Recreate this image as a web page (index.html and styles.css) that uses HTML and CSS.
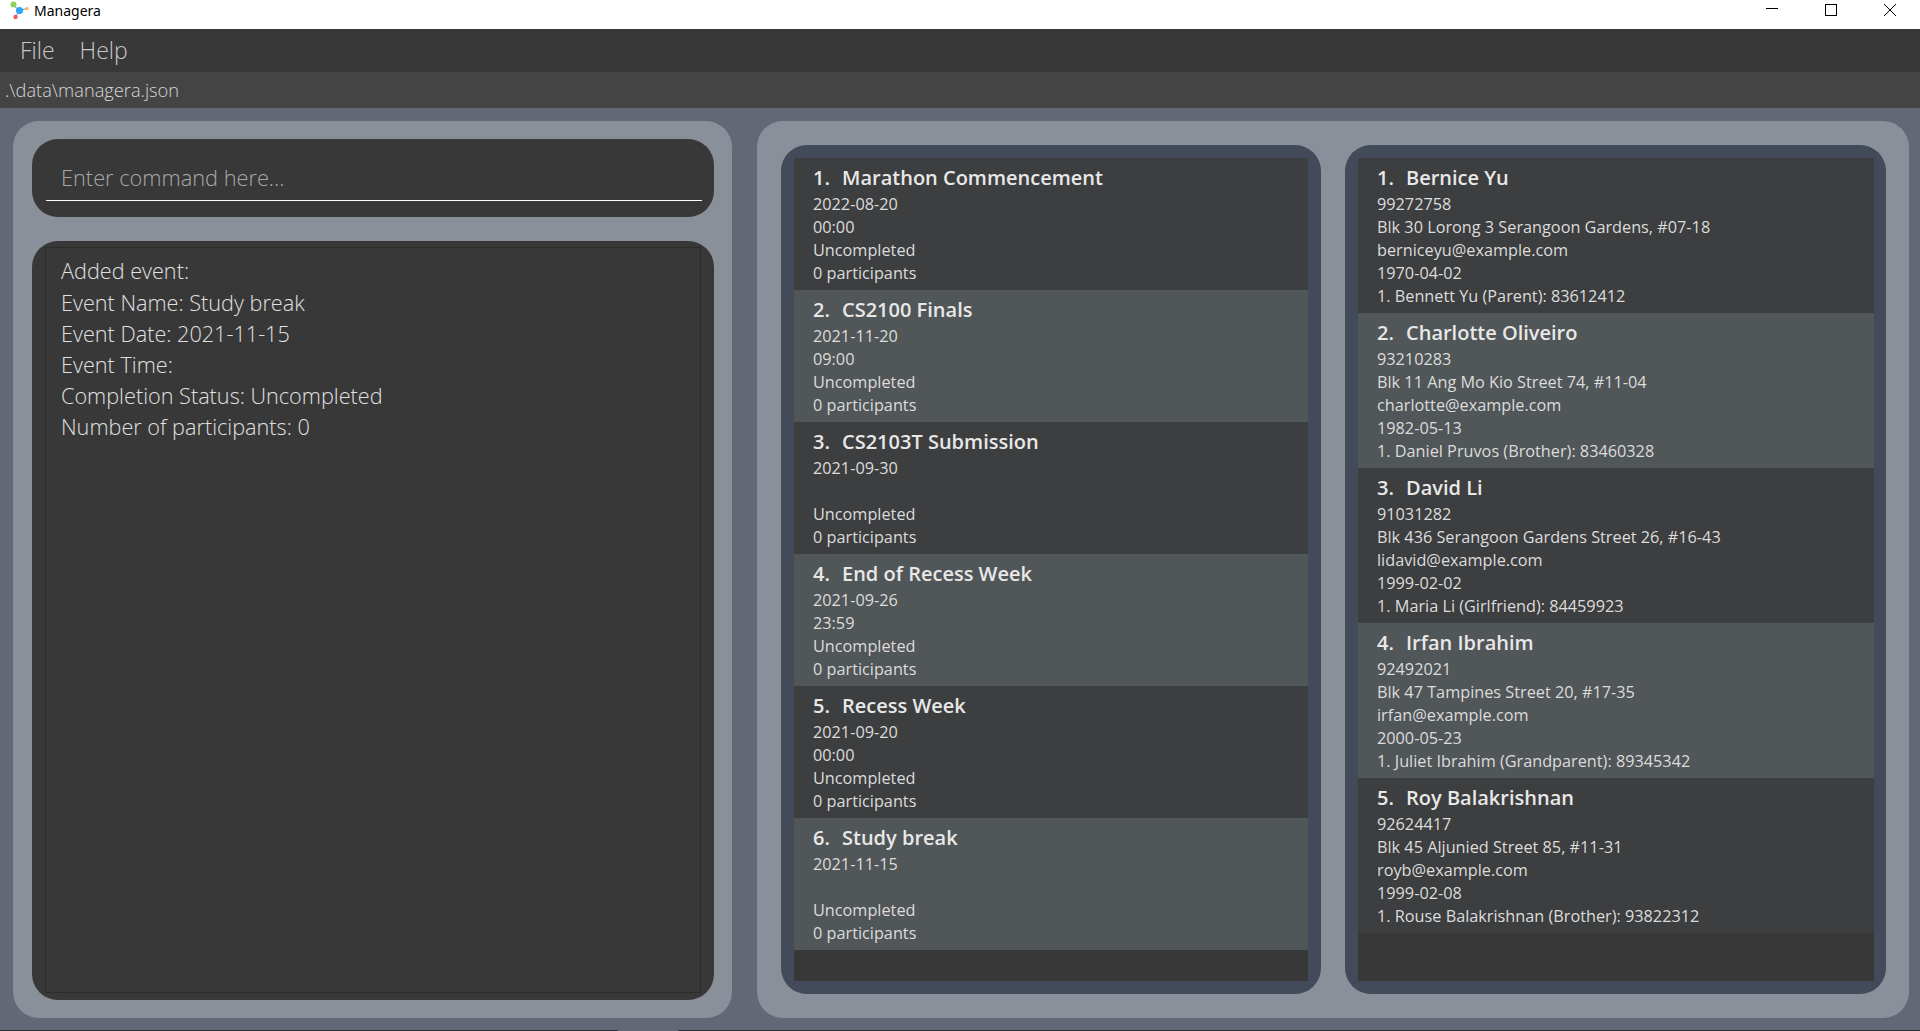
FILE: index.html
```html
<!DOCTYPE html>
<html lang="en">
<head>
    <meta charset="UTF-8">
    <meta name="viewport" content="width=device-width, initial-scale=1.0">
    <title>Managera</title>
    <link rel="stylesheet" href="styles.css">
</head>
<body>
    <header class="title-bar">
        <svg class="app-icon" width="30" height="22" viewBox="0 0 30 22">
            <path d="M13 5 L19.5 10.5 L27 8.5 M19.5 10.5 L15.5 17" stroke="#6b8fb0" stroke-width="1" fill="none"/>
            <circle cx="13.5" cy="4.5" r="3" fill="#8bd45a"/>
            <circle cx="19.5" cy="10.5" r="3.6" fill="#2ea7f2"/>
            <circle cx="27" cy="8.5" r="1.6" fill="#f5b04a"/>
            <circle cx="15.5" cy="17" r="2.2" fill="#f4555f"/>
        </svg>
        <span class="app-name">Managera</span>
        <div class="window-controls">
            <svg width="14" height="14" viewBox="0 0 14 14"><path d="M1 5.5 H13" stroke="#000" fill="none"/></svg>
            <svg width="14" height="14" viewBox="0 0 14 14"><rect x="1.5" y="1.5" width="11" height="11" stroke="#000" fill="none"/></svg>
            <svg width="14" height="14" viewBox="0 0 14 14"><path d="M1 1 L13 13 M13 1 L1 13" stroke="#000" fill="none"/></svg>
        </div>
    </header>
    <nav class="menu-bar">
        <span>File</span>
        <span>Help</span>
    </nav>
    <div class="status-bar">.\data\managera.json</div>
    <main class="main">
        <section class="panel panel-left">
            <div class="command-box">
                <div class="command-input">Enter command here...</div>
            </div>
            <div class="result-box">
                <div class="result-frame">
                    <p>Added event:</p>
                    <p>Event Name: Study break</p>
                    <p>Event Date: 2021-11-15</p>
                    <p>Event Time:</p>
                    <p>Completion Status: Uncompleted</p>
                    <p>Number of participants: 0</p>
                </div>
            </div>
        </section>
        <section class="panel panel-right">
            <div class="list list-events">
                <div class="list-inner">
                    <article class="card event-card">
                        <h3><span>1.</span>Marathon Commencement</h3>
                        <p>2022-08-20</p><p>00:00</p><p>Uncompleted</p><p>0 participants</p>
                    </article>
                    <article class="card event-card alt">
                        <h3><span>2.</span>CS2100 Finals</h3>
                        <p>2021-11-20</p><p>09:00</p><p>Uncompleted</p><p>0 participants</p>
                    </article>
                    <article class="card event-card">
                        <h3><span>3.</span>CS2103T Submission</h3>
                        <p>2021-09-30</p><p></p><p>Uncompleted</p><p>0 participants</p>
                    </article>
                    <article class="card event-card alt">
                        <h3><span>4.</span>End of Recess Week</h3>
                        <p>2021-09-26</p><p>23:59</p><p>Uncompleted</p><p>0 participants</p>
                    </article>
                    <article class="card event-card">
                        <h3><span>5.</span>Recess Week</h3>
                        <p>2021-09-20</p><p>00:00</p><p>Uncompleted</p><p>0 participants</p>
                    </article>
                    <article class="card event-card alt">
                        <h3><span>6.</span>Study break</h3>
                        <p>2021-11-15</p><p></p><p>Uncompleted</p><p>0 participants</p>
                    </article>
                </div>
            </div>
            <div class="list list-persons">
                <div class="list-inner">
                    <article class="card person-card">
                        <h3><span>1.</span>Bernice Yu</h3>
                        <p>99272758</p><p>Blk 30 Lorong 3 Serangoon Gardens, #07-18</p><p>berniceyu@example.com</p><p>1970-04-02</p><p>1. Bennett Yu (Parent): 83612412</p>
                    </article>
                    <article class="card person-card alt">
                        <h3><span>2.</span>Charlotte Oliveiro</h3>
                        <p>93210283</p><p>Blk 11 Ang Mo Kio Street 74, #11-04</p><p>charlotte@example.com</p><p>1982-05-13</p><p>1. Daniel Pruvos (Brother): 83460328</p>
                    </article>
                    <article class="card person-card">
                        <h3><span>3.</span>David Li</h3>
                        <p>91031282</p><p>Blk 436 Serangoon Gardens Street 26, #16-43</p><p>lidavid@example.com</p><p>1999-02-02</p><p>1. Maria Li (Girlfriend): 84459923</p>
                    </article>
                    <article class="card person-card alt">
                        <h3><span>4.</span>Irfan Ibrahim</h3>
                        <p>92492021</p><p>Blk 47 Tampines Street 20, #17-35</p><p>irfan@example.com</p><p>2000-05-23</p><p>1. Juliet Ibrahim (Grandparent): 89345342</p>
                    </article>
                    <article class="card person-card">
                        <h3><span>5.</span>Roy Balakrishnan</h3>
                        <p>92624417</p><p>Blk 45 Aljunied Street 85, #11-31</p><p>royb@example.com</p><p>1999-02-08</p><p>1. Rouse Balakrishnan (Brother): 93822312</p>
                    </article>
                </div>
            </div>
        </section>
    </main>
    <div class="bottom-edge"></div>
</body>
</html>
```

FILE: styles.css
```css
html, body {
    height: 100%;
}

body {
    margin: 0;
    display: flex;
    flex-direction: column;
    height: 1031px;
    overflow: hidden;
    background-color: #626875;
    font-family: 'Open Sans', sans-serif;
    color: #fff;
}

p, h3 {
    margin: 0;
}

.title-bar {
    display: flex;
    align-items: center;
    height: 29px;
    flex-shrink: 0;
    background-color: #fff;
    color: #000;
}

.app-icon {
    align-self: flex-start;
}

.app-name {
    margin-left: 4px;
    margin-bottom: 8px;
    font-family: 'Noto Sans', sans-serif;
    font-size: 14px;
}

.window-controls {
    margin-left: auto;
    margin-right: 23px;
    margin-bottom: 9px;
    display: flex;
    gap: 45px;
}

.menu-bar {
    display: flex;
    gap: 25px;
    align-items: center;
    height: 41px;
    padding-left: 20px;
    padding-bottom: 2px;
    flex-shrink: 0;
    background-color: #383838;
    color: #c9c9c9;
    font-size: 23px;
    font-weight: 300;
}

.status-bar {
    height: 36px;
    line-height: 36px;
    padding-left: 5px;
    flex-shrink: 0;
    background-color: #444444;
    color: #d6d6d6;
    font-size: 18.25px;
    font-weight: 300;
}

.main {
    flex: 1;
    display: flex;
    gap: 25px;
    padding: 13px 11px 12px 13px;
    min-height: 0;
}

.panel {
    background-color: #8a9099;
    border-radius: 26px;
    box-sizing: border-box;
    display: flex;
}

.panel-left {
    width: 719px;
    flex-direction: column;
    gap: 24px;
    padding: 18px 18px 18px 19px;
}

.command-box {
    height: 78px;
    box-sizing: border-box;
    flex-shrink: 0;
    padding: 0 12px 0 14px;
    background-color: #383838;
    border-radius: 26px;
}

.command-input {
    height: 62px;
    box-sizing: border-box;
    line-height: 77px;
    padding-left: 15px;
    border-bottom: 1px solid #fff;
    color: #a8a8a8;
    font-size: 21.75px;
    font-weight: 300;
}

.result-box {
    flex: 1;
    padding: 6px 13px 7px 13px;
    background-color: #383838;
    border-radius: 26px;
}

.result-frame {
    height: 100%;
    box-sizing: border-box;
    padding: 7.3px 15px;
    border: 1px solid #2c2c2c;
    color: #e0e0e0;
    font-size: 21.65px;
    font-weight: 300;
    line-height: 31.2px;
}

.panel-right {
    flex: 1;
    gap: 24px;
    padding: 24px 23px 24px 24px;
}

.list {
    padding: 13px 12px 13px 13px;
    background-color: #434a59;
    border-radius: 26px;
    box-sizing: border-box;
}

.list-events {
    flex: 0 0 540px;
    padding-right: 13px;
}

.list-persons {
    flex: 1;
}

.list-inner {
    height: 100%;
    background-color: #383838;
}

.card {
    box-sizing: border-box;
    padding: 7px 16px 0 19px;
    background-color: #3c3e3f;
    color: #dcdcdc;
    font-size: 16.25px;
    line-height: 23.1px;
}

.card.alt {
    background-color: #515658;
}

.card h3 {
    margin-bottom: 2px;
    color: #e8e8e8;
    font-size: 20px;
    font-weight: 600;
    line-height: 26px;
}

.card h3 span {
    display: inline-block;
    width: 29px;
}

.card p {
    min-height: 23.1px;
}

.event-card {
    height: 132px;
}

.person-card {
    height: 155px;
}

/* 1px strip along the bottom, lighter where the window below shows through */
.bottom-edge {
    height: 1px;
    flex-shrink: 0;
    background: linear-gradient(to right, #2b3036 618px, #626875 618px, #626875 678px, #2b3036 678px);
}
```
